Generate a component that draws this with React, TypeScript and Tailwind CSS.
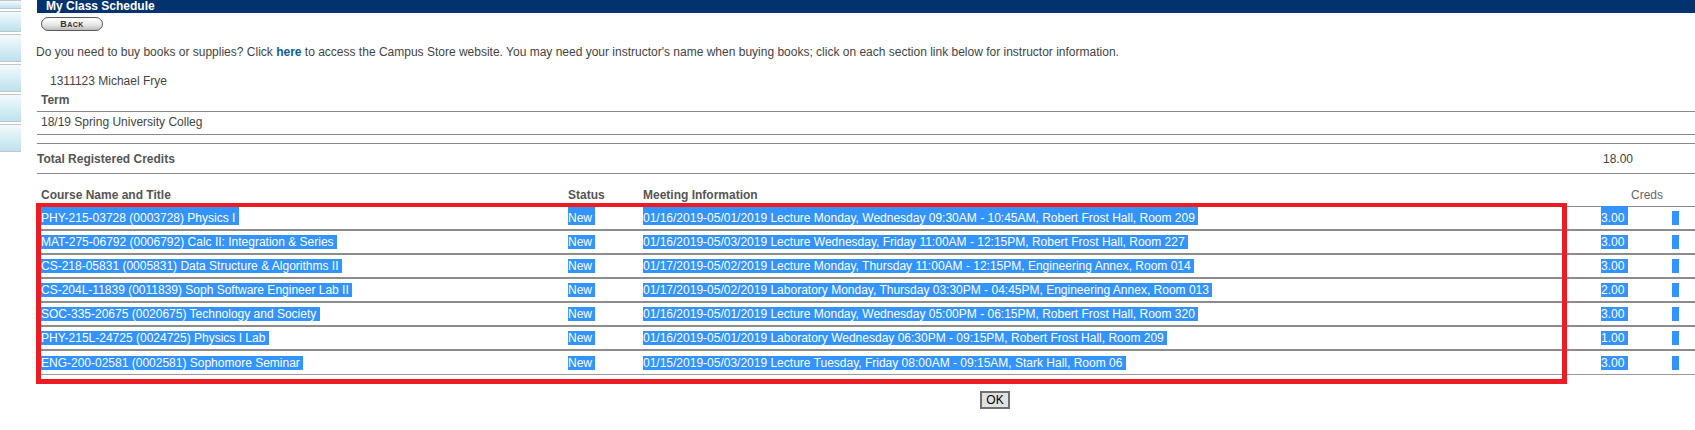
const courses = [
  {
    name: "PHY-215-03728 (0003728) Physics I",
    meeting:
      "01/16/2019-05/01/2019 Lecture Monday, Wednesday 09:30AM - 10:45AM, Robert Frost Hall, Room 209",
    creds: "3.00",
  },
  {
    name: "MAT-275-06792 (0006792) Calc II: Integration & Series",
    meeting:
      "01/16/2019-05/03/2019 Lecture Wednesday, Friday 11:00AM - 12:15PM, Robert Frost Hall, Room 227",
    creds: "3.00",
  },
  {
    name: "CS-218-05831 (0005831) Data Structure & Algorithms II",
    meeting:
      "01/17/2019-05/02/2019 Lecture Monday, Thursday 11:00AM - 12:15PM, Engineering Annex, Room 014",
    creds: "3.00",
  },
  {
    name: "CS-204L-11839 (0011839) Soph Software Engineer Lab II",
    meeting:
      "01/17/2019-05/02/2019 Laboratory Monday, Thursday 03:30PM - 04:45PM, Engineering Annex, Room 013",
    creds: "2.00",
  },
  {
    name: "SOC-335-20675 (0020675) Technology and Society",
    meeting:
      "01/16/2019-05/01/2019 Lecture Monday, Wednesday 05:00PM - 06:15PM, Robert Frost Hall, Room 320",
    creds: "3.00",
  },
  {
    name: "PHY-215L-24725 (0024725) Physics I Lab",
    meeting:
      "01/16/2019-05/01/2019 Laboratory Wednesday 06:30PM - 09:15PM, Robert Frost Hall, Room 209",
    creds: "1.00",
  },
  {
    name: "ENG-200-02581 (0002581) Sophomore Seminar",
    meeting:
      "01/15/2019-05/03/2019 Lecture Tuesday, Friday 08:00AM - 09:15AM, Stark Hall, Room 06",
    creds: "3.00",
  },
]

const tabs = ["h-[9px]", "h-[21px]", "h-[28px]", "h-[28px]", "h-[28px]", "h-[28px]"]

function Sel({ children, first }: { children: React.ReactNode; first?: boolean }) {
  return (
    <span className={`bg-[#3393ff] text-white ${first ? "pt-[5px]" : ""}`}>
      {children}
      {"\u00a0"}
    </span>
  )
}

export default function App() {
  return (
    <div
      className="relative flex h-[430px] w-[1695px] overflow-hidden bg-white text-[12px] leading-[14px] text-[#444]"
      style={{ fontFamily: '"Liberation Sans", Arial, sans-serif' }}
    >
      {/* left nav tabs */}
      <div className="flex w-[21px] shrink-0 flex-col gap-[2px]">
        {tabs.map((h, i) => (
          <div
            key={i}
            className={`${h} border-t border-b border-[#c4c4c4] bg-linear-to-b from-[#f3fafc] to-[#bce2ee]`}
          />
        ))}
      </div>

      <div className="ml-[16px] flex flex-1 flex-col">
        <div className="h-[13px] bg-[#03336f] pl-[9px] text-[12px] font-bold leading-[13px] text-white">
          My Class Schedule
        </div>

        <div className="mt-[4px] ml-[4px] flex h-[14px] w-[62px] items-center justify-center rounded-full border border-[#5a5a5a] bg-linear-to-b from-white via-[#ececec] to-[#bdbdbd] text-[#333]">
          <span className="text-[9px] font-bold leading-none tracking-[0.5px]">
            B<span className="text-[7px]">ACK</span>
          </span>
        </div>

        <p className="mt-[14px] -ml-[1px]">
          Do you need to buy books or supplies? Click{" "}
          <a className="font-bold text-[#125c94]">here</a> to access the Campus Store
          website. You may need your instructor's name when buying books; click on each
          section link below for instructor information.
        </p>

        <div className="mt-[15px] h-[14px] pl-[13px]">1311123 Michael Frye</div>

        <div className="h-[24px] border-b border-[#8a8a8a] pl-[4px] pt-[5px] font-bold text-[#555]">
          Term
        </div>
        <div className="h-[23px] border-b border-[#8a8a8a] pl-[4px] pt-[3px]">
          18/19 Spring University Colleg
        </div>

        <div className="h-[8px]" />
        <div className="flex h-[31px] border-t border-b border-[#8a8a8a] pt-[8px]">
          <span className="w-[1566px] font-bold text-[#555]">Total Registered Credits</span>
          <span>18.00</span>
        </div>

        {/* table header */}
        <div className="flex h-[33px] items-end border-b border-[#8a8a8a] pb-[4px] font-bold text-[#555]">
          <div className="w-[531px] pl-[4px]">Course Name and Title</div>
          <div className="w-[75px]">Status</div>
          <div className="w-[988px]">Meeting Information</div>
          <div className="font-normal text-[#666]">Creds</div>
        </div>

        {courses.map((c, i) => (
          <div
            key={c.name}
            className={`flex h-[24px] items-center ${
              i === courses.length - 1 ? "border-b border-[#9a9a9a]" : "border-b-2 border-[#8c8c8c]"
            }`}
          >
            <div className="w-[531px] pl-[4px]">
              <Sel first={i === 0}>{c.name}</Sel>
            </div>
            <div className="w-[75px]">
              <Sel first={i === 0}>New</Sel>
            </div>
            <div className="w-[958px]">
              <Sel first={i === 0}>{c.meeting}</Sel>
            </div>
            <div className="w-[71px]">
              <Sel first={i === 0}>{c.creds}</Sel>
            </div>
            <div className="h-[14px] w-[7px] bg-[#3393ff]" />
          </div>
        ))}

        <div className="mt-[16px] ml-[943px]">
          <button className="flex h-[18px] w-[30px] items-center justify-center border-2 border-[#707070] bg-[#e1e1e1] text-[12px] leading-none text-black">
            OK
          </button>
        </div>
      </div>

      {/* red annotation box */}
      <div className="pointer-events-none absolute left-[36px] top-[203px] h-[181px] w-[1531px] border-[5px] border-t-4 border-[#ed1c24]" />
    </div>
  )
}
